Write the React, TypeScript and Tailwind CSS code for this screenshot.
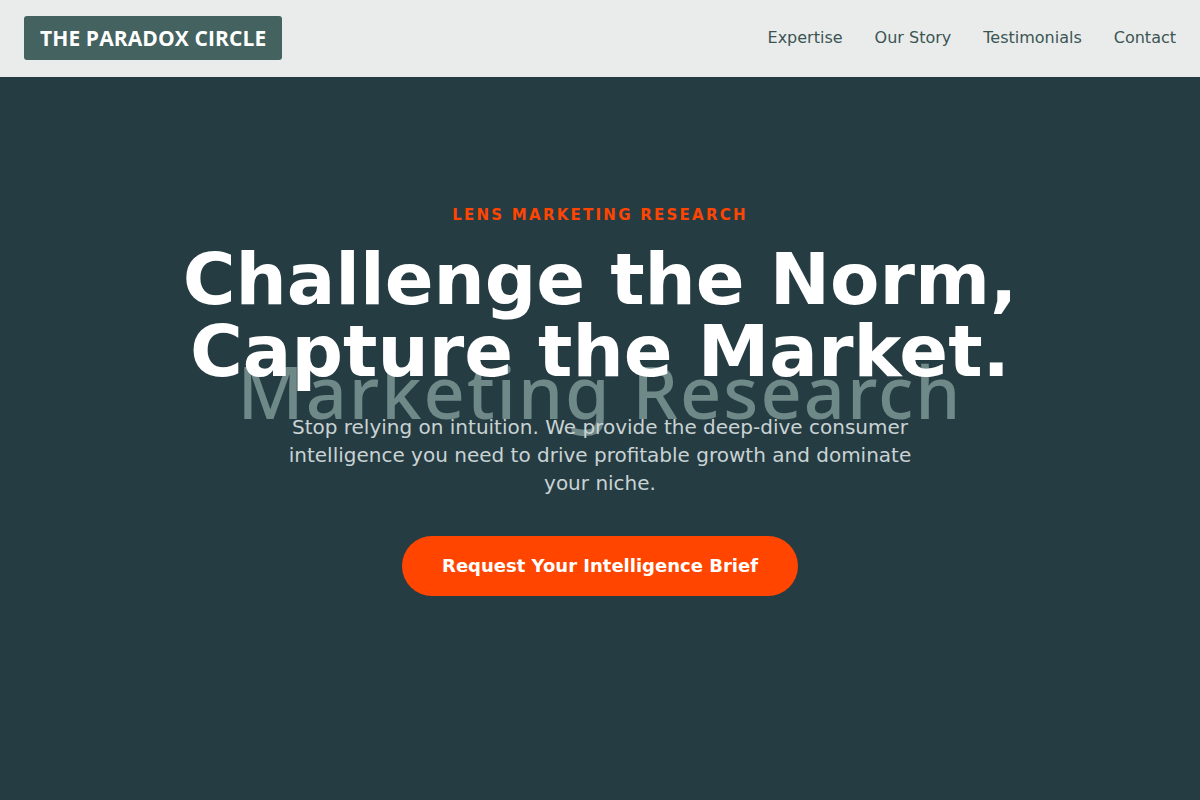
import React from 'react';

const navLinks = ['Expertise', 'Our Story', 'Testimonials', 'Contact'];

const Navbar: React.FC = () => {
  return (
    <header className="bg-[#e9ecea] px-6 pt-4 pb-[17px] flex items-center justify-between">
      <a
        href="#"
        className="bg-[#44625f] text-white rounded-[3px] px-4 py-2 text-[21px] leading-7 font-bold tracking-[0.005em] font-['Open_Sans',sans-serif]"
      >
        THE PARADOX CIRCLE
      </a>
      <nav className="flex items-center gap-8">
        {navLinks.map((link) => (
          <a key={link} href="#" className="text-[#3c5554] text-base font-['DejaVu_Sans',sans-serif]">
            {link}
          </a>
        ))}
      </nav>
    </header>
  );
};

const Hero: React.FC = () => {
  return (
    <section className="bg-[#263c43] min-h-[723px] flex flex-col items-center pt-[126px] text-center font-['DejaVu_Sans',sans-serif]">
      <p className="text-[#ff4500] text-[15px] leading-6 font-bold tracking-[0.15em] mb-4">
        LENS MARKETING RESEARCH
      </p>
      <div className="relative mb-[26px]">
        {/* decorative word layer behind the headline */}
        <span
          aria-hidden="true"
          className="absolute left-1/2 -translate-x-1/2 top-[112px] whitespace-nowrap text-[72px] leading-none font-medium tracking-[0.028em] text-[#6f8888] font-['Noto_Sans',sans-serif]"
        >
          Marketing Research
        </span>
        <h1 className="relative text-white font-bold text-[72px] leading-none">
          Challenge the Norm,
          <br />
          Capture the Market.
        </h1>
      </div>
      <p className="relative text-[#c9d3d4] text-[20px] leading-7 max-w-[640px]">
        Stop relying on intuition. We provide the deep-dive consumer intelligence you need to drive
        profitable growth and dominate your niche.
      </p>
      <a
        href="#"
        className="mt-[39px] bg-[#ff4500] text-white font-bold text-lg leading-7 px-10 py-4 rounded-full"
      >
        Request Your Intelligence Brief
      </a>
    </section>
  );
};

const App: React.FC = () => {
  return (
    <div className="min-h-screen bg-[#263c43]">
      <Navbar />
      <Hero />
    </div>
  );
};

export default App;
